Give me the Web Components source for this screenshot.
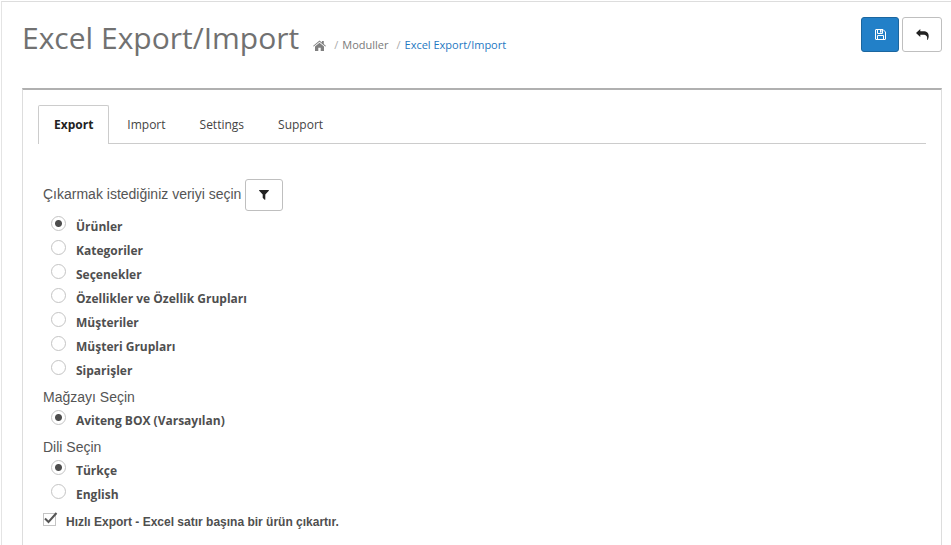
<!DOCTYPE html>
<html lang="tr">
<head>
<meta charset="utf-8">
<title>Excel Export/Import</title>
<style>
html, body { margin: 0; height: 100%; background: #fff; }
body { font: 12px/18px "Open Sans", sans-serif; color: #4f4f4f; overflow: hidden; }
</style>
</head>
<body>
<admin-page>
  <page-header slot="header" heading="Excel Export/Import">
    <bread-crumbs slot="crumbs"></bread-crumbs>
    <icon-button slot="actions" kind="primary" label="Kaydet" icon="save"></icon-button>
    <icon-button slot="actions" kind="back" label="Geri" icon="reply"></icon-button>
  </page-header>
  <tab-panel tabs="Export,Import,Settings,Support">
    <option-group heading="Çıkarmak istediğiniz veriyi seçin" options="Ürünler|Kategoriler|Seçenekler|Özellikler ve Özellik Grupları|Müşteriler|Müşteri Grupları|Siparişler">
      <icon-button slot="tool" kind="filter" label="Filtre" icon="filter"></icon-button>
    </option-group>
    <option-group heading="Mağzayı Seçin" options="Aviteng BOX (Varsayılan)"></option-group>
    <option-group heading="Dili Seçin" options="Türkçe|English"></option-group>
    <check-option>Hızlı Export - Excel satır başına bir ürün çıkartır.</check-option>
  </tab-panel>
</admin-page>
<script>
const define = (name, render, ready) => customElements.define(name, class extends HTMLElement {
  connectedCallback() {
    if (this.shadowRoot) return;
    this.attachShadow({ mode: 'open' }).innerHTML = '<style>*{box-sizing:border-box}</style>' + render(this);
    if (ready) ready(this.shadowRoot);
  }
});

const icons = {
  save: `<svg width="11" height="11" viewBox="0 0 11 11" fill="none" stroke="currentColor"><path d="M.5 1Q.5 .5 1 .5H8L10.500 3V10Q10.500 10.500 10 10.500H1Q.5 10.500 .5 10ZM2.500 .5V4.500H7.500V.5M2.500 10.500V6.500H8.500V10.500"/><path d="M5 1H6.500V3.500H5Z" fill="currentColor" stroke="none"/></svg>`,
  reply: `<svg width="13" height="11" viewBox="0 0 13 11" fill="currentColor"><path d="M0 4 4.300 0V2.300H7.200C11 2.300 12.700 4.200 12.700 7.200 12.700 8.500 12.200 9.900 11.500 10.900 11.200 11 11 10.800 11.100 10.500 11.600 7.300 10.400 5.800 7.100 5.800H4.300V8Z"/></svg>`,
  filter: `<svg width="10" height="10" viewBox="0 0 10 10" fill="currentColor"><path d="M.4 0H9.600Q10.200 .3 9.800 .8L6.300 4.400V9.500Q6.100 10 5.600 9.700L3.900 8.100 3.700 7.700V4.400L.2 .8Q-.2 .3 .4 0Z"/></svg>`
};

define('admin-page', () => `<style>
  :host { display: block; min-height: 100%; padding-top: 1px; }
  main { min-height: calc(100vh - 1px); margin-left: 1px; border-top: 1px solid #ddd; border-left: 1px solid #e4e4e4; padding: 15px 9px 0 20px; display: flex; flex-direction: column; }
  .body { flex: 1; display: flex; margin-top: 29px; }
</style><main><slot name="header"></slot><div class="body"><slot></slot></div></main>`);

define('page-header', el => `<style>
  :host { display: flex; align-items: flex-start; }
  h1 { margin: 0 14px 0 0; font-size: 30px; line-height: 42px; font-weight: 400; color: #717171; }
  .crumbs { flex: 1; padding-top: 19px; }
  .actions { display: flex; gap: 3px; }
</style><h1>${el.getAttribute('heading')}</h1><div class="crumbs"><slot name="crumbs"></slot></div><div class="actions"><slot name="actions"></slot></div>`);

define('bread-crumbs', () => `<style>
  :host { display: block; font-size: 11px; line-height: 18px; }
  ol { display: flex; list-style: none; margin: 0; padding: 0; }
  li + li::before { content: "/"; color: #aaa; padding: 0 4px 0 8px; }
  a { color: #7a7a7a; text-decoration: none; }
  li:last-child a { color: #1e78c2; }
  svg { display: inline-block; vertical-align: -3px; color: #808080; }
</style><nav><ol>
<li><a href="#" aria-label="Anasayfa"><svg width="13" height="12" viewBox="0 0 13 12" fill="currentColor"><path d="M6.500 .4 8.900 2.400V.9H10.800V4L13 5.900 12.300 6.600 6.500 1.800 .7 6.600 0 5.900Z"/><path d="M6.500 2.700 11 6.500V11H7.700V7.700H5.300V11H2V6.500Z"/></svg></a></li>
<li><a href="#">Moduller</a></li><li><a href="#">Excel Export/Import</a></li></ol></nav>`);

define('icon-button', el => `<style>
  :host { display: inline-block; }
  button { display: flex; align-items: center; justify-content: center; width: 38px; height: 35px; padding: 0; border: 1px solid #bfbfbf; border-radius: 3px; background: #fff; color: #222; }
  :host([kind=primary]) button { background: #2280c8; border-color: #1b669f; color: #fff; }
  :host([kind=back]) button { width: 40px; }
  :host([kind=filter]) button { height: 32px; }
</style><button type="button" aria-label="${el.getAttribute('label')}">${icons[el.getAttribute('icon')]}</button>`);

define('tab-panel', el => `<style>
  :host { display: block; flex: 1; border: solid #ddd; border-width: 0 1px; border-top: 2px solid #b0b0b0; padding: 15px; }
  .tabs { display: flex; gap: 2px; border-bottom: 1px solid #ccc; }
  button { font: inherit; color: #444; background: none; border: 1px solid transparent; border-bottom: 0; margin-bottom: -1px; padding: 10px 15px; }
  button[aria-selected=true] { font-weight: 700; color: #222; background: #fff; border-color: #ccc; border-radius: 2px 2px 0 0; }
  .content { padding: 35px 5px 0; }
</style><div class="tabs" role="tablist">${el.getAttribute('tabs').split(',').map((t, i) => `<button type="button" role="tab" aria-selected="${i === 0}">${t}</button>`).join('')}</div><div class="content" role="tabpanel"><slot></slot></div>`,
  root => {
    const tabs = root.querySelectorAll('button');
    tabs.forEach(t => t.onclick = () => tabs.forEach(o => o.setAttribute('aria-selected', o === t)));
  });

define('option-group', el => `<style>
  :host { display: block; }
  .head { display: flex; gap: 4px; padding-top: 4px; font: 14px/22px "Liberation Sans", Arial, sans-serif; color: #555; }
  .head.tool { padding: 0 0 3px; line-height: 30px; }
  .row { display: flex; padding-left: 8px; gap: 10px; height: 24px; font-weight: 700; line-height: 26px; }
  input { appearance: none; flex: none; width: 15px; height: 15px; margin: 2px 0 0; border: 1px solid #c4c4c4; border-radius: 50%; background: #fff; }
  input:checked { background: radial-gradient(circle, #4d4d4d 3px, transparent 4px); }
</style><div role="radiogroup" aria-labelledby="h"><div class="head ${el.children.length ? 'tool' : ''}"><span id="h">${el.getAttribute('heading')}</span><slot name="tool"></slot></div>
${el.getAttribute('options').split('|').map((o, i) => `<div class="row"><input type="radio" name="choice" id="o${i}" ${i ? '' : 'checked'}><label for="o${i}">${o}</label></div>`).join('')}</div>`);

define('check-option', () => `<style>
  :host { display: block; padding-top: 6px; }
  label { display: flex; gap: 8px; font: 700 12px/20px "Liberation Sans", Arial, sans-serif; }
  .box { display: grid; width: 15px; height: 14px; }
  input, svg { grid-area: 1 / 1; }
  input { appearance: none; width: 13px; height: 13px; margin: 1px 0 0; border: 1px solid #c4c4c4; }
  svg { pointer-events: none; visibility: hidden; }
  input:checked + svg { visibility: visible; }
</style><label><span class="box"><input type="checkbox" checked><svg width="15" height="14" viewBox="0 0 15 14" fill="none" stroke="#555" stroke-width="2"><path d="M2 6.500 5.500 10 13.500 1"/></svg></span><span><slot></slot></span></label>`);
</script>
</body>
</html>
